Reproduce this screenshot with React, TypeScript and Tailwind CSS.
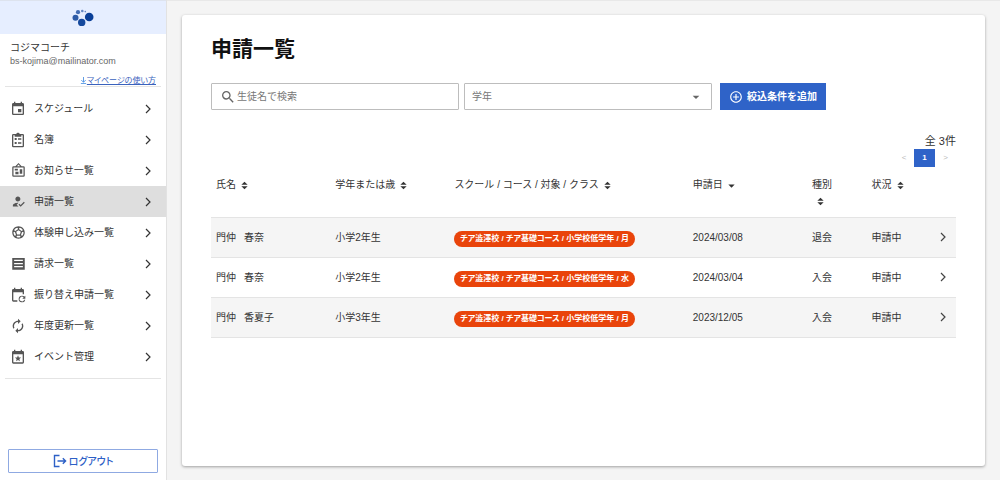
import type { ReactNode } from "react";
import {
  MdAddCircleOutline,
  MdArrowDropDown,
  MdAutorenew,
  MdHowToReg,
  MdInsertInvitation,
  MdSearch,
  MdSportsSoccer,
} from "react-icons/md";

type SvgProps = { className?: string; children?: ReactNode };

const Svg = ({ className = "", children }: SvgProps) => (
  <svg viewBox="0 0 24 24" fill="currentColor" className={className} aria-hidden="true">
    {children}
  </svg>
);

const ClipboardIcon = () => (
  <Svg className="size-4">
    <path d="M19 3h-4.18C14.4 1.84 13.3 1 12 1s-2.4.84-2.82 2H5a2 2 0 0 0-2 2v16a2 2 0 0 0 2 2h14a2 2 0 0 0 2-2V5a2 2 0 0 0-2-2Zm0 18H5V5h2v2h10V5h2v16ZM7 9h3v3H7V9Zm5 .5h5v2h-5v-2ZM7 15h3v3H7v-3Zm5 .5h5v2h-5v-2Z" />
  </Svg>
);

const BulletinIcon = () => (
  <Svg className="size-[15px]">
    <path d="M12.04,2.5L9.53,5H14.53L12.04,2.5M4,7V20H20V7H4M12,0L17,5V5H20A2,2 0 0,1 22,7V20A2,2 0 0,1 20,22H4A2,2 0 0,1 2,20V7A2,2 0 0,1 4,5H7V5L12,0M7,18V14H12V18H7M14,17V10H18V17H14M6,12V9H11V12H6Z" />
  </Svg>
);

const InvoiceIcon = () => (
  <Svg className="size-[15px]">
    <path d="M2 3h20v19H2V3Zm3 3v2h14V6H5Zm0 5v2h14v-2H5Zm0 5v2h14v-2H5Z" fillRule="evenodd" />
  </Svg>
);

const CalendarRefreshIcon = () => (
  <Svg className="size-4">
    <path d="M6 1v2H5a2 2 0 0 0-2 2v15a2 2 0 0 0 2 2h6v-2H5V8h14v3h2V5a2 2 0 0 0-2-2h-1V1h-2v2H8V1H6Z" />
    <path d="M18 13a5 5 0 1 0 4.900 6h-1.700a3.400 3.400 0 1 1-.8-3.400L18.500 17.500H23V13l-1.400 1.400A5 5 0 0 0 18 13Z" />
  </Svg>
);

const CalendarStarIcon = () => (
  <Svg className="size-4">
    <path d="M19 3h-1V1h-2v2H8V1H6v2H5a2 2 0 0 0-2 2v15a2 2 0 0 0 2 2h14a2 2 0 0 0 2-2V5a2 2 0 0 0-2-2Zm0 17H5V8h14v12Z" />
    <path d="m12 9.500 1.300 3.100 3.300.3-2.500 2.200.7 3.300-2.800-1.800-2.800 1.800.7-3.300-2.500-2.200 3.300-.3L12 9.500Z" />
  </Svg>
);

const ChevronRight = () => (
  <svg
    viewBox="0 0 12 12"
    fill="none"
    stroke="currentColor"
    strokeWidth="1.2"
    className="size-3 shrink-0"
    aria-hidden="true"
  >
    <path d="m4 2 4 4-4 4" />
  </svg>
);

const SortIcon = () => (
  <svg viewBox="0 0 8 10" fill="currentColor" className="size-[9px] shrink-0" aria-hidden="true">
    <path d="M4 .8 7.500 4.200h-7L4 .8ZM4 9.200.5 5.800h7L4 9.200Z" />
  </svg>
);

const SortDescIcon = () => (
  <svg viewBox="0 0 8 10" fill="currentColor" className="size-[9px] shrink-0" aria-hidden="true">
    <path d="M4 7.500.5 4h7L4 7.500Z" />
  </svg>
);

const Logo = () => (
  <svg viewBox="0 0 22 18" fill="#0a3f98" className="h-[18px] w-[22px]" role="img" aria-label="ロゴ">
    <circle cx="17.200" cy="8" r="4.300" />
    <circle cx="9.700" cy="13.400" r="3.700" opacity="0.95" />
    <circle cx="3.500" cy="8.800" r="3" opacity="0.85" />
    <circle cx="6" cy="3.200" r="2.100" opacity="0.75" />
    <circle cx="10.300" cy="2" r="1.300" opacity="0.6" />
    <circle cx="13.300" cy="2.600" r="0.800" opacity="0.6" />
  </svg>
);

const MENU = [
  { label: "スケジュール", icon: <MdInsertInvitation className="size-4" /> },
  { label: "名簿", icon: <ClipboardIcon /> },
  { label: "お知らせ一覧", icon: <BulletinIcon /> },
  { label: "申請一覧", icon: <MdHowToReg className="size-[15px]" />, active: true },
  { label: "体験申し込み一覧", icon: <MdSportsSoccer className="size-[15px]" /> },
  { label: "請求一覧", icon: <InvoiceIcon /> },
  { label: "振り替え申請一覧", icon: <CalendarRefreshIcon /> },
  { label: "年度更新一覧", icon: <MdAutorenew className="size-4" /> },
  { label: "イベント管理", icon: <CalendarStarIcon /> },
];

const COLUMNS = [
  { label: "氏名", width: "w-[16%]", sort: "both" },
  { label: "学年または歳", width: "w-[16%]", sort: "both" },
  { label: "スクール / コース / 対象 / クラス", width: "w-[32%]", sort: "both" },
  { label: "申請日", width: "w-[16%]", sort: "desc" },
  { label: "種別", width: "w-[8%]", sort: "both", stacked: true },
  { label: "状況", width: "w-[8%]", sort: "both" },
];

const ROWS = [
  { last: "門仲", first: "春奈", grade: "小学2年生", day: "月", date: "2024/03/08", kind: "退会" },
  { last: "門仲", first: "春奈", grade: "小学2年生", day: "水", date: "2024/03/04", kind: "入会" },
  { last: "門仲", first: "香夏子", grade: "小学3年生", day: "月", date: "2023/12/05", kind: "入会" },
];

function Sidebar() {
  return (
    <aside className="flex w-[167px] shrink-0 flex-col border-r border-[#e2e2e2] bg-white">
      <div className="flex h-[34px] items-center justify-center border-t border-[#dde3ee] bg-[#e6eeff]">
        <Logo />
      </div>

      <div className="px-[10px] pt-2">
        <p className="leading-3">コジマコーチ</p>
        <p className="text-[9px] leading-[15px] text-[#666]">bs-kojima@mailinator.com</p>
      </div>

      <div className="mx-[5px] mt-[6px] flex h-3 justify-end border-b border-[#e4e4e4] pr-[5px]">
        <a href="#guide" className="flex items-center text-[8px] leading-[10px] text-[#3a62bd]">
          <svg
            viewBox="0 0 8 8"
            fill="none"
            stroke="#4a90e2"
            className="size-[7px]"
            aria-hidden="true"
          >
            <path d="M4 0v6M1.500 3.500 4 6l2.500-2.500M1 7.500h6" />
          </svg>
          <span className="underline [font-feature-settings:'palt']">マイページの使い方</span>
        </a>
      </div>

      <nav className="pt-[6px]">
        {MENU.map((m) => (
          <a
            key={m.label}
            href="#menu"
            className={`flex h-[31px] items-center pr-3 pl-[10px] ${m.active ? "bg-[#dedede]" : ""}`}
          >
            <span className="flex size-4 items-center justify-center text-[#555]">{m.icon}</span>
            <span className="ml-2 flex-1">{m.label}</span>
            <ChevronRight />
          </a>
        ))}
      </nav>
      <div className="mx-[5px] mt-[6px] border-b border-[#e4e4e4]" />

      <button className="mx-2 mt-auto mb-[7px] flex h-6 items-center justify-center gap-0.5 rounded-[1px] border border-[#8fa9e2] font-medium text-[#2d60c6]">
        <svg
          viewBox="0 0 14 14"
          fill="none"
          stroke="currentColor"
          strokeWidth="1.4"
          className="size-[14px]"
          aria-hidden="true"
        >
          <path d="M6.500 1.500h-5v11h5M4.500 7h8M9.800 4.200 12.600 7 9.800 9.800" />
        </svg>
        <span className="[font-feature-settings:'palt']">ログアウト</span>
      </button>
    </aside>
  );
}

function Filters() {
  return (
    <div className="mt-5 mr-[130px] flex h-[27px] items-stretch">
      <div className="grid flex-1 grid-cols-2 gap-[5px]">
        <label className="flex min-w-0 items-center rounded-[1px] border border-[#bdbdbd] pl-2">
          <MdSearch className="size-4 shrink-0 text-[#666]" />
          <input
            type="text"
            aria-label="生徒名で検索"
            placeholder="生徒名で検索"
            className="ml-px w-full min-w-0 outline-none placeholder:text-[#777]"
          />
        </label>
        <div className="relative flex min-w-0">
          <select
            aria-label="学年"
            defaultValue=""
            className="w-full appearance-none rounded-[1px] border border-[#bdbdbd] bg-white pl-[7px] text-[#777] outline-none"
          >
            <option value="">学年</option>
          </select>
          <MdArrowDropDown className="pointer-events-none absolute top-[6px] right-2 size-4 text-[#666]" />
        </div>
      </div>
      <button className="ml-2 flex w-[106px] items-center justify-center gap-1 bg-[#2f63c8] font-bold text-white">
        <MdAddCircleOutline className="size-[14px]" />
        絞込条件を追加
      </button>
    </div>
  );
}

function ApplicationTable() {
  return (
    <table className="w-full table-fixed border-collapse text-left">
      <thead>
        <tr className="h-[50px] border-b border-[#e4e4e4] align-top">
          {COLUMNS.map((c) => (
            <th key={c.label} className={`${c.width} pt-[10px] pl-[5px] font-normal whitespace-nowrap`}>
              <button className={`flex leading-4 ${c.stacked ? "flex-col" : "items-center"}`}>
                {c.label}
                <span className={c.stacked ? "mt-1 ml-1" : "ml-1"}>
                  {c.sort === "desc" ? <SortDescIcon /> : <SortIcon />}
                </span>
              </button>
            </th>
          ))}
          <th className="w-[4%]" aria-label="詳細" />
        </tr>
      </thead>
      <tbody>
        {ROWS.map((r) => (
          <tr key={r.date} className="h-10 border-b border-[#e4e4e4] odd:bg-[#f5f5f5]">
            <td className="pl-[5px]">
              {r.last}
              <span className="ml-2">{r.first}</span>
            </td>
            <td className="pl-[5px]">{r.grade}</td>
            <td className="pl-[5px]">
              <span className="mt-[3px] flex h-4 w-fit items-center rounded-full bg-[#e9440b] px-[6px] text-[8px] font-bold whitespace-nowrap text-white [font-feature-settings:'palt']">
                チア澁澤校 / チア基礎コース / 小学校低学年 / {r.day}
              </span>
            </td>
            <td className="pl-[5px]">{r.date}</td>
            <td className="pl-[5px]">{r.kind}</td>
            <td className="pl-[5px]">申請中</td>
            <td>
              <a href="#detail" aria-label="詳細" className="flex justify-center pl-1 text-[#444]">
                <ChevronRight />
              </a>
            </td>
          </tr>
        ))}
      </tbody>
    </table>
  );
}

export default function App() {
  return (
    <div className="flex min-h-screen bg-[#f4f4f4] font-['Liberation_Sans','Noto_Sans_CJK_JP',sans-serif] text-[10px] text-[#333]">
      <Sidebar />

      <main className="flex flex-1 border-t border-[#e8e8e8] px-[15px] pt-[14px] pb-[14px]">
        <section className="flex-1 rounded-[3px] bg-white px-[29px] pt-5 shadow-[0_1px_3px_rgba(0,0,0,0.35)]">
          <h1 className="text-[21px] leading-7 font-bold text-[#111]">申請一覧</h1>
          <Filters />

          <div className="mt-6 flex flex-col items-end">
            <p className="text-[11px] leading-[14px]">全 3件</p>
            <div className="flex h-[19px] items-center text-[8px] text-[#bbb]">
              <button className="w-5" disabled>
                &lt;
              </button>
              <button className="h-[18px] w-[21px] bg-[#2f63c8] font-bold text-white">1</button>
              <button className="w-[21px]" disabled>
                &gt;
              </button>
            </div>
          </div>

          <ApplicationTable />
        </section>
      </main>
    </div>
  );
}
